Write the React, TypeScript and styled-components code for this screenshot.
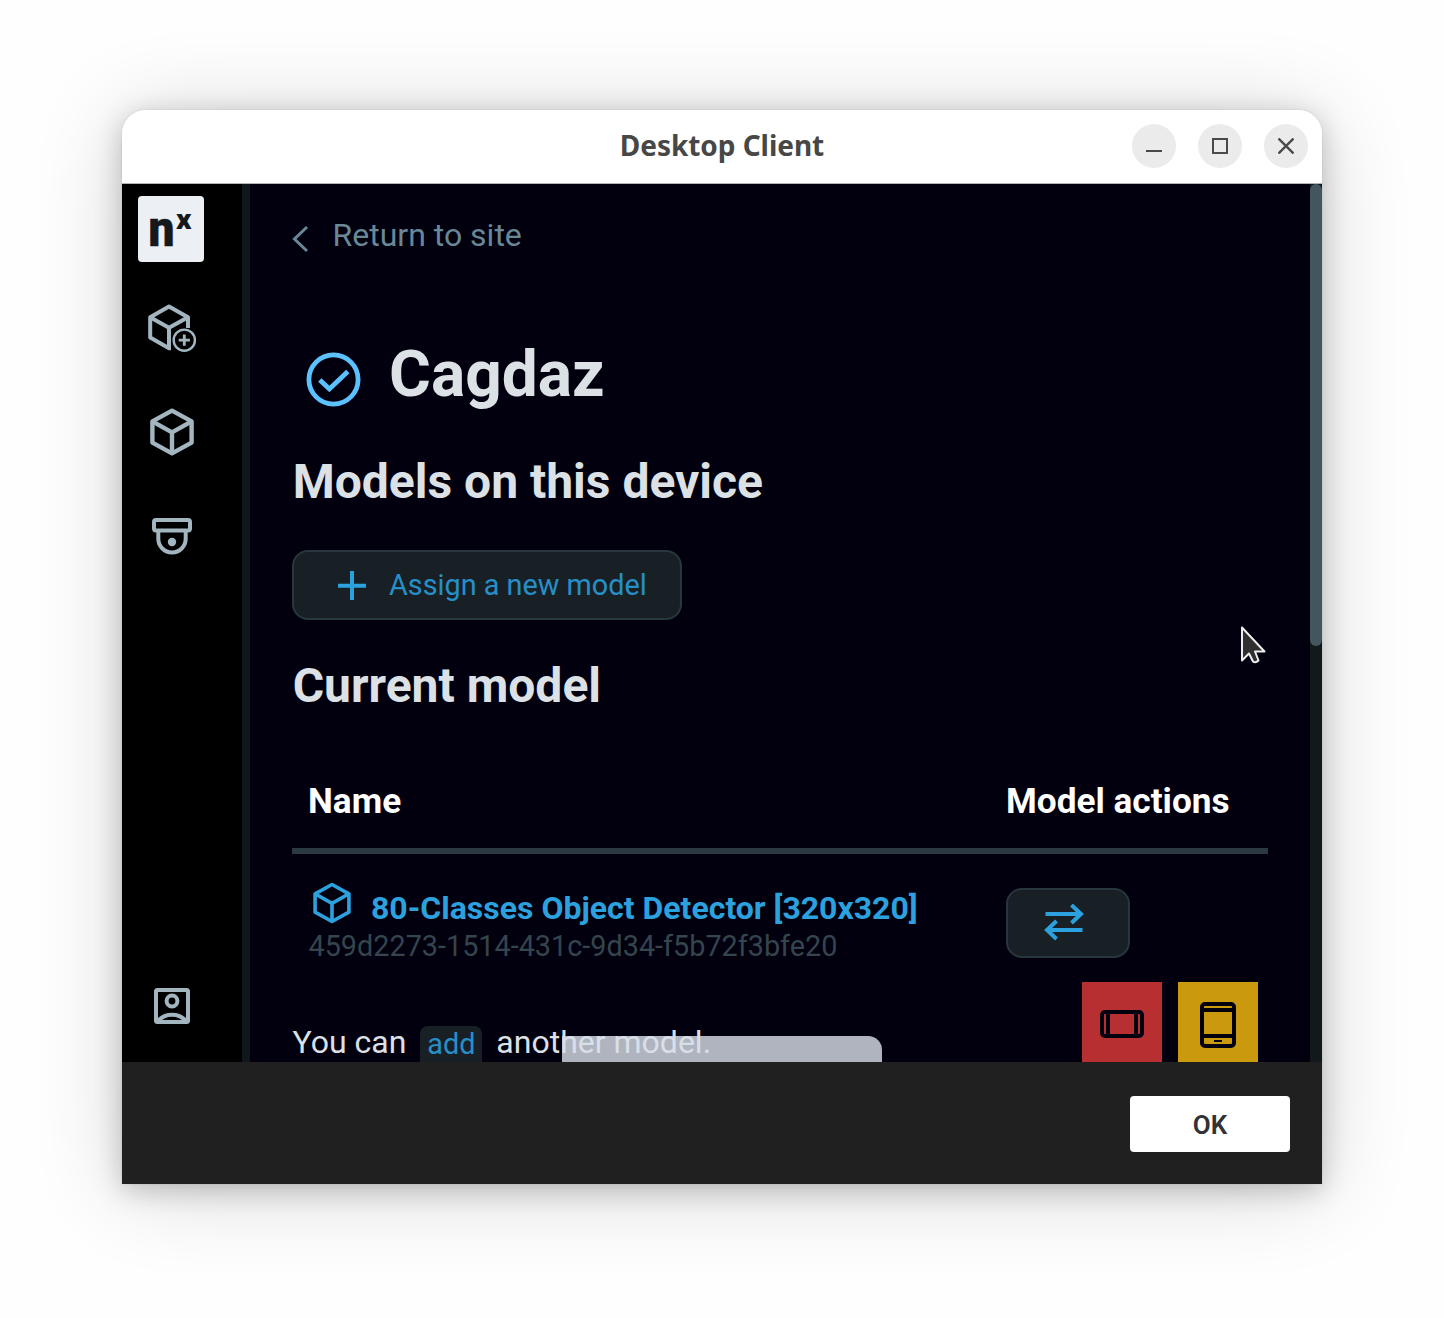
import React from "react";
import styled, { createGlobalStyle } from "styled-components";

const GlobalStyle = createGlobalStyle`
  * { box-sizing: border-box; }
  html, body { margin: 0; background: #fefefe; }
  body { font-family: Roboto, "Liberation Sans", sans-serif; }
  h1, h2, p { margin: 0; }
  button { font: inherit; cursor: pointer; }
  svg { display: block; flex: none; }
`;

const Desktop = styled.div`
  width: 1444px;
  height: 1318px;
  padding: 110px 122px 134px;
  overflow: hidden;
`;

const Window = styled.div`
  width: 1200px;
  height: 1074px;
  display: flex;
  flex-direction: column;
  border-radius: 24px 24px 0 0;
  box-shadow: 0 0 2px rgba(0, 0, 0, 0.12), 0 6px 28px rgba(0, 0, 0, 0.22),
    0 6px 90px rgba(0, 0, 0, 0.16);
`;

const TitleBar = styled.header`
  height: 74px;
  flex: none;
  display: grid;
  grid-template-columns: 1fr auto 1fr;
  align-items: center;
  padding: 0 14px 2px;
  background: #fff;
  border-bottom: 1px solid #b4b4b6;
  border-radius: 24px 24px 0 0;
`;

const WindowTitle = styled.div`
  grid-column: 2;
  padding-bottom: 1px;
  color: #474747;
  font: 700 28px/40px "Noto Sans", "Open Sans", sans-serif;
  letter-spacing: -0.05px;
`;

const WindowButtons = styled.div`
  display: flex;
  justify-content: flex-end;
  gap: 22px;
`;

const RoundButton = styled.button`
  width: 44px;
  height: 44px;
  padding: 0;
  border: 0;
  border-radius: 50%;
  background: #ebebeb;
  display: grid;
  place-items: center;
`;

const Body = styled.div`
  height: 878px;
  flex: none;
  display: flex;
  position: relative;
  overflow: hidden;
  background: #02000f;
`;

const Sidebar = styled.nav`
  width: 128px;
  flex: none;
  display: flex;
  flex-direction: column;
  align-items: flex-start;
  padding: 12px 0 38px 16px;
  background: #000;
  border-right: 8px solid #11181b;
`;

const Logo = styled.div`
  width: 66px;
  height: 66px;
  border-radius: 4px;
  background: #ecf0f4;
  display: grid;
  place-items: center;
`;

const NavItem = styled.a<{ $gap: number; $bottom?: boolean }>`
  width: 68px;
  display: flex;
  justify-content: center;
  margin-top: ${(p) => (p.$bottom ? "auto" : `${p.$gap}px`)};
  color: #a3b6c0;
`;

const Content = styled.main`
  flex: 1;
  min-width: 0;
  padding: 31px 42px 0;
`;

const BackLink = styled.a`
  display: flex;
  align-items: center;
  gap: 23.5px;
  height: 40px;
  color: #698796;
  font-size: 32px;
  line-height: 40px;
  svg { margin-top: 8px; }
`;

const DeviceHeading = styled.div`
  display: flex;
  align-items: center;
  gap: 28px;
  height: 80px;
  margin-top: 80px;
  padding-left: 14px;
  color: #5bc1ff;
  svg { margin-top: 9px; }
`;

const DeviceName = styled.h1`
  color: #dce1e6;
  font-size: 64px;
  line-height: 80px;
  font-weight: 700;
`;

const SectionTitle = styled.h2<{ $top: number }>`
  margin-top: ${(p) => p.$top}px;
  padding-left: 0.7px;
  color: #dce1e6;
  font-size: 48px;
  line-height: 56px;
  font-weight: 700;
`;

const ActionButton = styled.button<{ $width: number }>`
  width: ${(p) => p.$width}px;
  height: 70px;
  display: flex;
  align-items: center;
  padding: 0 0 0 ${(p) => (p.$width > 200 ? 44 : 36)}px;
  gap: 23px;
  border: 2px solid #28373d;
  border-radius: 16px;
  background: #192025;
  color: #2ba2de;
`;

const AssignRow = styled.div`
  margin-top: 40px;
`;

const ButtonLabel = styled.span`
  color: #278fc8;
  font-size: 28.8px;
  line-height: 40px;
  white-space: nowrap;
  transform: scaleY(1.05);
`;

const Table = styled.section`
  margin-top: 65px;
`;

const TableRow = styled.div<{ $head?: boolean }>`
  display: grid;
  grid-template-columns: 1fr 278px;
  height: ${(p) => (p.$head ? 75 : 108)}px;
  ${(p) => p.$head && "border-bottom: 6px solid #2b3a41;"}
`;

const HeadCell = styled.div`
  padding-left: 16px;
  color: #fff;
  font-size: 35.2px;
  line-height: 44px;
  font-weight: 700;
`;

const ModelCell = styled.div`
  padding: 28px 0 0 16px;
`;

const ActionCell = styled.div`
  padding: 34px 0 0 16px;
`;

const ModelName = styled.div`
  display: flex;
  height: 46px;
  gap: 20px;
  padding-left: 5px;
  color: #2ba2de;
  font-size: 32px;
  line-height: 53px;
  font-weight: 700;
  white-space: nowrap;
`;

const ModelId = styled.div`
  padding-left: 0.5px;
  color: #34454d;
  font-size: 28.8px;
  line-height: 36px;
  transform: scaleY(1.05);
`;

const Hint = styled.p`
  margin-top: 60px;
  height: 46px;
  display: flex;
  padding-left: 0.5px;
  color: #dce1e6;
  font-size: 32px;
  line-height: 41px;
`;

const AddChip = styled.a`
  width: 62px;
  height: 46px;
  margin: 4px 14px 0;
  border-radius: 8px;
  background: #192025;
  color: #278fc8;
  font-size: 28.8px;
  line-height: 37px;
  text-align: center;
`;

const ScrollTrack = styled.div`
  width: 12px;
  flex: none;
  background: #12191b;
`;

const ScrollThumb = styled.div`
  height: 462px;
  border-radius: 6px;
  background: #43565f;
`;

const Toast = styled.div`
  position: absolute;
  left: 440px;
  bottom: 0;
  width: 320px;
  height: 26px;
  border-radius: 0 14px 0 0;
  background: rgba(215, 222, 231, 0.81);
`;

const DeviceSwitch = styled.div`
  position: absolute;
  right: 64px;
  bottom: 0;
  display: flex;
  gap: 16px;
`;

const Tile = styled.div<{ $color: string; $drop: number }>`
  width: 80px;
  height: 80px;
  display: grid;
  place-items: center;
  padding-top: ${(p) => p.$drop}px;
  background: ${(p) => p.$color};
  color: #02000f;
`;

const Pointer = styled.div`
  position: absolute;
  left: 1117px;
  top: 439px;
`;

const Footer = styled.footer`
  flex: 1;
  display: flex;
  align-items: center;
  justify-content: flex-end;
  padding: 2px 32px 0;
  background: #202020;
`;

const OkButton = styled.button`
  width: 160px;
  height: 56px;
  padding: 1px 0 0;
  border: 0;
  border-radius: 4px;
  background: #fff;
  color: #303236;
  font-size: 26px;
  font-weight: 600;
`;

const LogoText = styled.text`
  font-family: Roboto, sans-serif;
  font-weight: 900;
`;

const Cube = ({ w, h, stroke }: { w: number; h: number; stroke: number }) => (
  <svg width={w} height={h} viewBox="0 0 44 48" fill="none" stroke="currentColor" strokeWidth={stroke} strokeLinejoin="round">
    <path d="M22 2.6 41.6 13.4V34.6L22 45.4 2.4 34.6V13.4Z" />
    <path d="M2.8 13.6 22 24.4 41.2 13.6M22 24.4V45" />
  </svg>
);

const CubeAdd = () => (
  <svg width="49" height="49" viewBox="0 0 49 49" fill="none" stroke="currentColor" strokeWidth="4" strokeLinejoin="round">
    <path d="M40 24V13.2L21 2.4 2.2 13.2V33.6L21 44.2H23" />
    <path d="M2.6 13.4 21 23.8 39.6 13.4M21 23.8V44" />
    <circle cx="36.3" cy="36.2" r="10.6" strokeWidth="2.4" />
    <path d="M36.3 30.6v11.2M30.7 36.2h11.2" strokeWidth="2.8" />
  </svg>
);

const Camera = () => (
  <svg width="40" height="37" viewBox="0 0 40 37" fill="none" stroke="currentColor" strokeWidth="4">
    <rect x="2" y="2" width="36" height="10.6" rx="2" />
    <path d="M6.3 12.8V20.8a13.7 13.7 0 0 0 27.4 0V12.8" />
    <circle cx="20" cy="24" r="4.2" fill="currentColor" stroke="none" />
  </svg>
);

const Account = () => (
  <svg width="36" height="36" viewBox="0 0 36 36" fill="none" stroke="currentColor" strokeWidth="4">
    <rect x="2" y="2" width="32" height="32" rx="1.5" />
    <circle cx="18" cy="13" r="5.4" />
    <path d="M4 33C11 24.5 25 24.5 32 33" />
  </svg>
);

export default function App() {
  return (
    <>
      <GlobalStyle />
      <Desktop>
        <Window>
          <TitleBar>
            <WindowTitle>Desktop Client</WindowTitle>
            <WindowButtons>
              <RoundButton aria-label="Minimize">
                <svg width="16" height="16" viewBox="0 0 16 16" stroke="#4a4a4a" strokeWidth="2"><path d="M0 13h16" /></svg>
              </RoundButton>
              <RoundButton aria-label="Maximize">
                <svg width="16" height="16" viewBox="0 0 16 16" fill="none" stroke="#4a4a4a" strokeWidth="2"><path d="M1 1h14v14H1z" /></svg>
              </RoundButton>
              <RoundButton aria-label="Close">
                <svg width="16" height="16" viewBox="0 0 16 16" stroke="#4a4a4a" strokeWidth="2.4"><path d="m.5.5 15 15M15.5.5l-15 15" /></svg>
              </RoundButton>
            </WindowButtons>
          </TitleBar>
          <Body>
            <Sidebar>
              <Logo>
                <svg width="66" height="66" viewBox="0 0 66 66" fill="#15191c">
                  <LogoText x="10.5" y="49.5" fontSize="50" textLength="26" lengthAdjust="spacingAndGlyphs" stroke="#15191c" strokeWidth="0.6">n</LogoText>
                  <LogoText x="38" y="32.5" fontSize="28" textLength="15.5" lengthAdjust="spacingAndGlyphs">x</LogoText>
                </svg>
              </Logo>
              <NavItem $gap={42}><CubeAdd /></NavItem>
              <NavItem $gap={55}><Cube w={44} h={48} stroke={4.4} /></NavItem>
              <NavItem $gap={62}><Camera /></NavItem>
              <NavItem $gap={0} $bottom><Account /></NavItem>
            </Sidebar>
            <Content>
              <BackLink>
                <svg width="17" height="28" viewBox="0 0 17 28" fill="none" stroke="currentColor" strokeWidth="3"><path d="M15 2 2.5 14 15 26" /></svg>
                Return to site
              </BackLink>
              <DeviceHeading>
                <svg width="55" height="55" viewBox="0 0 55 55" fill="none" stroke="currentColor" strokeWidth="4.8">
                  <circle cx="27.5" cy="27.5" r="24.6" />
                  <path d="m13.8 28 9.6 9L41.8 19.6" />
                </svg>
                <DeviceName>Cagdaz</DeviceName>
              </DeviceHeading>
              <SectionTitle $top={39}>Models on this device</SectionTitle>
              <AssignRow>
                <ActionButton $width={390}>
                  <svg width="28" height="30" viewBox="0 0 28 30" stroke="currentColor" strokeWidth="4"><path d="M14 1v29M0 15.8h28" /></svg>
                  <ButtonLabel>Assign a new model</ButtonLabel>
                </ActionButton>
              </AssignRow>
              <SectionTitle $top={38}>Current model</SectionTitle>
              <Table>
                <TableRow $head>
                  <HeadCell>Name</HeadCell>
                  <HeadCell>Model actions</HeadCell>
                </TableRow>
                <TableRow>
                  <ModelCell>
                    <ModelName>
                      <Cube w={38} h={42} stroke={4.2} />
                      80-Classes Object Detector [320x320]
                    </ModelName>
                    <ModelId>459d2273-1514-431c-9d34-f5b72f3bfe20</ModelId>
                  </ModelCell>
                  <ActionCell>
                    <ActionButton $width={124} aria-label="Swap model">
                      <svg width="40" height="38" viewBox="0 0 40 38" fill="none" stroke="currentColor" strokeWidth="4">
                        <path d="M1.5 10H37M27.5 1l9.5 9-9.5 9M38.5 26H3M12.5 17 3 26l9.5 9" />
                      </svg>
                    </ActionButton>
                  </ActionCell>
                </TableRow>
              </Table>
              <Hint>You can <AddChip>add</AddChip> another model.</Hint>
            </Content>
            <ScrollTrack><ScrollThumb /></ScrollTrack>
            <Toast />
            <DeviceSwitch>
              <Tile $color="#b72f31" $drop={4}>
                <svg width="44" height="28" viewBox="0 0 44 28" fill="none" stroke="currentColor" strokeWidth="4">
                  <rect x="2" y="2" width="40" height="24" rx="3" />
                  <path d="M8 2v24M36 2v24" />
                </svg>
              </Tile>
              <Tile $color="#cb990d" $drop={6}>
                <svg width="36" height="46" viewBox="0 0 36 46" fill="none" stroke="currentColor" strokeWidth="4">
                  <rect x="2" y="2" width="32" height="42" rx="3" />
                  <path d="M2 8h32M2 34h32" />
                  <path d="M14 39h8" strokeWidth="2" />
                </svg>
              </Tile>
            </DeviceSwitch>
            <Pointer>
              <svg width="30" height="42" viewBox="0 0 30 42">
                <path d="M3 4.5V37.5L10 30.5 14 38.5Q16.5 40.5 19.5 37.5L16 28.5H25.5Z" fill="#303030" stroke="#eee" strokeWidth="2" strokeLinejoin="round" />
              </svg>
            </Pointer>
          </Body>
          <Footer><OkButton>OK</OkButton></Footer>
        </Window>
      </Desktop>
    </>
  );
}
